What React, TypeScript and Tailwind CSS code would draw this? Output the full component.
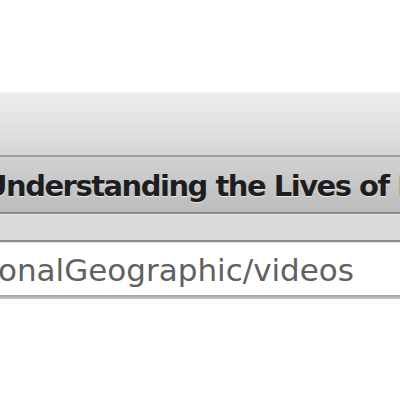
import React from 'react';

export default function App() {
  return (
    <div className="w-[400px] h-[400px] bg-white overflow-hidden flex flex-col" style={{ fontFamily: '"DejaVu Sans", Verdana, sans-serif' }}>
      <div className="h-[92px] bg-white" />
      <div className="h-[63px] bg-gradient-to-b from-[#ececec] via-[#e2e2e2] to-[#d6d6d6] border-t border-[#f4f4f4]" />
      <div className="h-[2px] bg-[#9c9c9c]" />
      <div className="h-[55px] bg-gradient-to-b from-[#d2d2d2] to-[#bcbcbc] flex items-center overflow-hidden pt-[5px]">
        <span className="whitespace-nowrap ml-[-16px] text-[29px] tracking-[-1.5px] font-bold text-[#1e1e1e] [text-shadow:0_1px_0_rgba(255,255,255,0.6)]">
          Understanding the Lives of Lions
        </span>
      </div>
      <div className="h-[2px] bg-[#8a8a8a]" />
      <div className="h-[26px] bg-[#d9d9d9] border-t border-[#ececec]" />
      <div className="h-[2px] bg-[#8c8c8c]" />
      <div className="h-[53px] bg-white flex items-center overflow-hidden border-t border-[#e0e0e0] pt-[3px]">
        <span className="whitespace-nowrap ml-[-2px] text-[31px] text-[#616161]">
          onalGeographic/videos
        </span>
      </div>
      <div className="h-[4px] bg-gradient-to-b from-[#a0a0a0] to-[#c8c8c8]" />
      <div className="flex-1 bg-white" />
    </div>
  );
}
